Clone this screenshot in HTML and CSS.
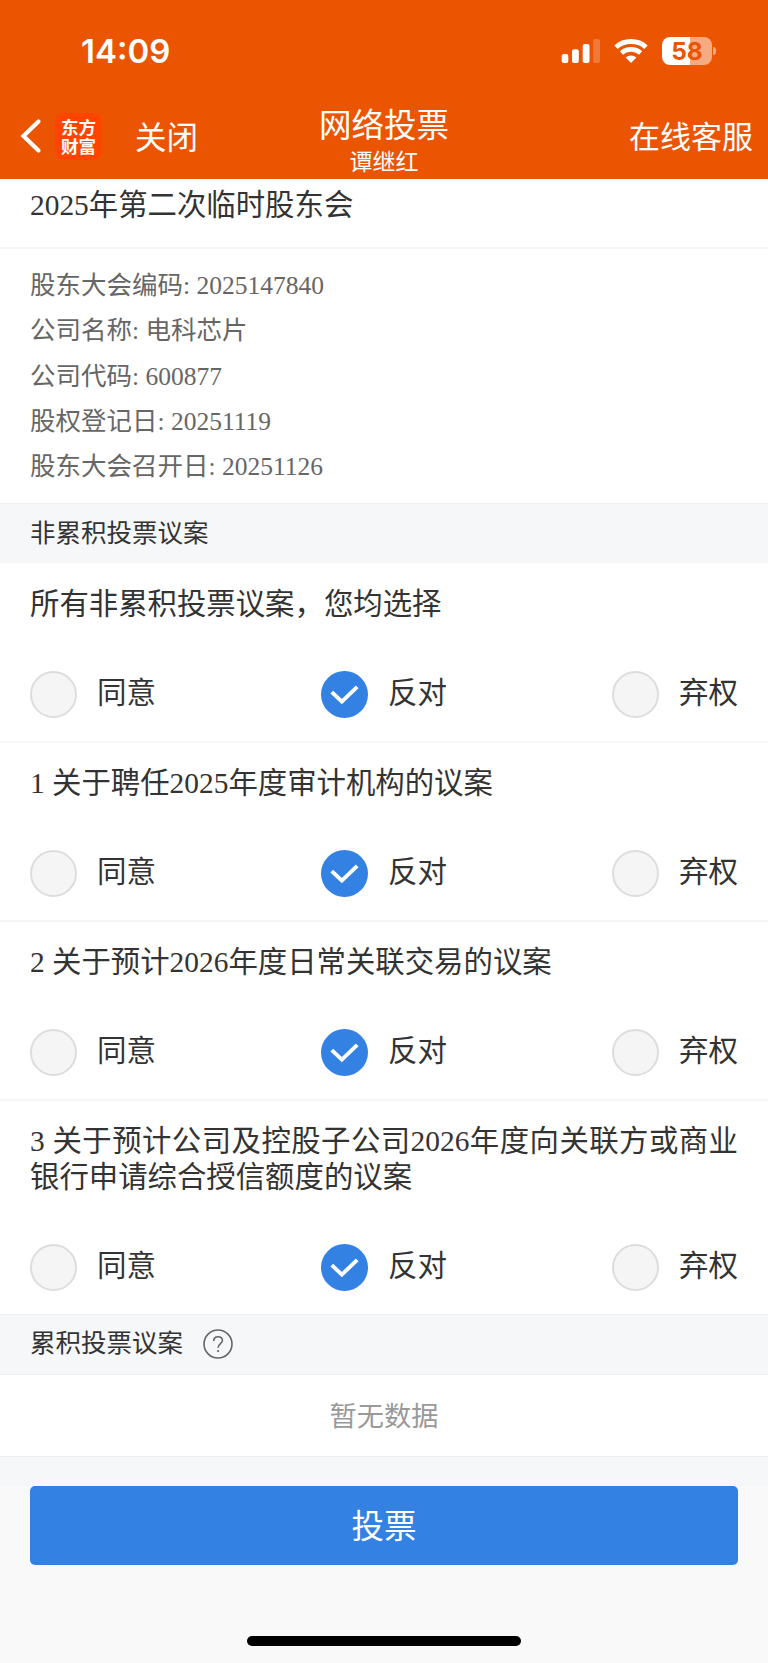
FILE: index.html
```
<!DOCTYPE html>
<html lang="zh-CN">
<head>
    <meta charset="UTF-8">
    <meta name="viewport" content="width=device-width, initial-scale=1.0">
    <link rel="stylesheet" href="styles.css">
    <title>网络投票</title>
</head>
<body>
    <header class="main-header">
        <div class="status-bar">
            <span class="time">14:09</span>
            <div class="status-icons">
                <svg class="signal" width="40" height="26" viewBox="0 0 40 26">
                    <rect x="0.7" y="16" width="6.6" height="9" rx="2" fill="#fff"/>
                    <rect x="11" y="11.3" width="6.8" height="13.7" rx="2" fill="#fff"/>
                    <rect x="21.7" y="6" width="6.8" height="19" rx="2" fill="#fff"/>
                    <rect x="32.2" y="1" width="6.8" height="24" rx="2" fill="#fff" opacity="0.22"/>
                </svg>
                <svg class="wifi" width="34" height="26" viewBox="0 0 34 26">
                    <path d="M2 9.2 C10 1.6 24 1.6 32 9.2" fill="none" stroke="#fff" stroke-width="4.8"/>
                    <path d="M7.4 15 C12.7 10.2 21.3 10.2 26.6 15" fill="none" stroke="#fff" stroke-width="4.6"/>
                    <path d="M11.6 19.6 C14.6 16.9 19.4 16.9 22.4 19.6 L17 25Z" fill="#fff"/>
                </svg>
                <div class="battery"><span>58</span></div>
            </div>
        </div>
        <nav class="nav-bar">
            <div class="nav-left">
                <svg class="back" width="22" height="36" viewBox="0 0 22 36">
                    <path d="M18.5 3.5 L3.5 18 L18.5 32.5" fill="none" stroke="#fff" stroke-width="4.2" stroke-linecap="round"/>
                </svg>
                <div class="logo">东方<br>财富</div>
                <span class="close">关闭</span>
            </div>
            <div class="nav-title">
                <h1>网络投票</h1>
                <p>谭继红</p>
            </div>
            <span class="service">在线客服</span>
        </nav>
    </header>

    <div id="main">
        <h2 class="meeting">2025年第二次临时股东会</h2>
        <ul class="info">
            <li>股东大会编码: 2025147840</li>
            <li>公司名称: 电科芯片</li>
            <li>公司代码: 600877</li>
            <li>股权登记日: 20251119</li>
            <li>股东大会召开日: 20251126</li>
        </ul>

        <div class="section">非累积投票议案</div>

        <div class="vote first">
            <h3>所有非累积投票议案，您均选择</h3>
            <div class="options">
                <div class="option"><i class="radio"></i><span>同意</span></div>
                <div class="option"><i class="radio checked"><svg viewBox="0 0 48 48"><path d="M11 21.5 L21.3 31.3 L37 16.2"/></svg></i><span>反对</span></div>
                <div class="option"><i class="radio"></i><span>弃权</span></div>
            </div>
        </div>
        <div class="vote">
            <h3>1 关于聘任2025年度审计机构的议案</h3>
            <div class="options">
                <div class="option"><i class="radio"></i><span>同意</span></div>
                <div class="option"><i class="radio checked"><svg viewBox="0 0 48 48"><path d="M11 21.5 L21.3 31.3 L37 16.2"/></svg></i><span>反对</span></div>
                <div class="option"><i class="radio"></i><span>弃权</span></div>
            </div>
        </div>
        <div class="vote">
            <h3>2 关于预计2026年度日常关联交易的议案</h3>
            <div class="options">
                <div class="option"><i class="radio"></i><span>同意</span></div>
                <div class="option"><i class="radio checked"><svg viewBox="0 0 48 48"><path d="M11 21.5 L21.3 31.3 L37 16.2"/></svg></i><span>反对</span></div>
                <div class="option"><i class="radio"></i><span>弃权</span></div>
            </div>
        </div>
        <div class="vote last">
            <h3>3 关于预计公司及控股子公司2026年度向关联方或商业银行申请综合授信额度的议案</h3>
            <div class="options">
                <div class="option"><i class="radio"></i><span>同意</span></div>
                <div class="option"><i class="radio checked"><svg viewBox="0 0 48 48"><path d="M11 21.5 L21.3 31.3 L37 16.2"/></svg></i><span>反对</span></div>
                <div class="option"><i class="radio"></i><span>弃权</span></div>
            </div>
        </div>

        <div class="section">累积投票议案
            <svg class="help" width="30" height="30" viewBox="0 0 30 30" fill="none" stroke="#666" stroke-width="1.6">
                <circle cx="15" cy="15" r="14"/>
                <path d="M10.7 12 C10.7 9.2 12.5 7.7 15.1 7.7 C17.7 7.7 19.4 9.3 19.4 11.5 C19.4 14.5 15.1 14.9 15.1 18.8"/>
                <circle cx="15.1" cy="22" r="1.1" fill="#666" stroke="none"/>
            </svg>
        </div>
        <div class="empty">暂无数据</div>
    </div>

    <footer class="footer">
        <button class="submit">投票</button>
        <div class="home-bar"></div>
    </footer>
</body>
</html>
```
FILE: styles.css
```
*, body{
    box-sizing: border-box;
    margin: 0;
    padding: 0;
}
body{
    font-family: 'Liberation Serif', 'Noto Sans CJK SC', sans-serif;
    color: #333;
    background: #f9f9f9;
}
li{
    list-style: none;
}
h1,h2,h3{
    font-weight: 400;
}

/* header */
.main-header{
    height: 179px;
    background: #eb5502;
    color: #fff;
    font-family: 'Noto Sans CJK SC', sans-serif;
}
.status-bar{
    display: flex;
    justify-content: space-between;
    height: 94px;
    padding: 31px 56px 0 81px;
}
.time{
    font: 600 33px/40px Inter, sans-serif;
}
.status-icons{
    display: flex;
    align-items: flex-start;
    padding-top: 7px;
}
.wifi{
    margin-left: 13px;
}
.battery{
    position: relative;
    width: 50px;
    height: 28px;
    margin: -1px 0 0 14px;
    border-radius: 8px;
    background: linear-gradient(90deg, #fff 28px, #f5aa81 28px);
    color: #eb5502;
    font: 700 24.5px/29px Inter, sans-serif;
    text-align: center;
}
.battery::after{
    position: absolute;
    content: '';
    right: -4px;
    top: 10px;
    width: 3px;
    height: 8px;
    border-radius: 0 3px 3px 0;
    background: #f5aa81;
}

.nav-bar{
    display: grid;
    grid-template-columns: 1fr auto 1fr;
    height: 85px;
    padding: 0 15px;
}
.nav-left{
    display: flex;
    align-items: center;
    height: 84px;
    padding-left: 5px;
}
.logo{
    width: 47px;
    height: 47px;
    margin-left: 13px;
    padding-top: 4px;
    border-radius: 9px;
    background: #ff4400;
    font-weight: 700;
    font-size: 17.5px;
    line-height: 19px;
    text-align: center;
}
.close{
    margin-left: 33px;
    padding-bottom: 3px;
    font-size: 31.5px;
    line-height: 40px;
}
.nav-title{
    text-align: center;
}
.nav-title h1{
    padding-top: 9px;
    font-size: 32.5px;
    line-height: 40px;
}
.nav-title p{
    padding-top: 1px;
    font-size: 23px;
    line-height: 32px;
}
.service{
    justify-self: end;
    font-size: 31px;
    line-height: 81px;
}

/* content */
#main{
    background: #fff;
}
.meeting{
    height: 70px;
    padding: 8px 30px 0;
    border-bottom: 2px solid #f5f5f5;
    font-size: 29.4px;
    line-height: 36px;
}
.info{
    height: 254px;
    padding: 14px 30px 0;
    color: #666;
    font-size: 25.5px;
    line-height: 45.3px;
}
.section{
    display: flex;
    align-items: center;
    height: 60px;
    padding: 0 30px;
    background: #f6f7f9;
    border-top: 1px solid #f0f0f0;
    font-size: 25.5px;
    line-height: 36px;
}
.help{
    margin-left: 20px;
}
.vote{
    padding: 23px 30px;
    border-bottom: 2px solid #f5f5f5;
}
.first{
    padding-top: 24px;
}
.vote h3{
    margin-bottom: 48.5px;
    font-size: 29.4px;
    line-height: 35.5px;
    text-align: justify;
}
.last{
    border-bottom: 0;
}
.options{
    display: flex;
    justify-content: space-between;
}
.option{
    display: flex;
    gap: 20px;
    font-size: 29.5px;
    line-height: 45px;
}
.radio{
    width: 47px;
    height: 47px;
    border: 2px solid #ddd;
    border-radius: 50%;
    background: #f5f5f5;
}
.checked{
    border: 0;
    background: #3281e3;
}
.checked svg{
    display: block;
    fill: none;
    stroke: #fff;
    stroke-width: 4;
}
.empty{
    height: 82px;
    border-top: 1px solid #eee;
    color: #999;
    font-size: 27.2px;
    line-height: 84px;
    text-align: center;
}

/* bottom */
.footer{
    display: flex;
    flex-direction: column;
    align-items: center;
    height: 206px;
    padding: 0 30px;
    border-top: 1px solid #eee;
    background: linear-gradient(#f6f7f9 29px, #f9f9f9 29px);
}
.submit{
    width: 100%;
    height: 79px;
    margin-top: 29px;
    padding-bottom: 4px;
    border: 0;
    border-radius: 5px;
    background: #3281e3;
    color: #fff;
    font-family: 'Noto Sans CJK SC', sans-serif;
    font-size: 32.5px;
}
.home-bar{
    width: 274px;
    height: 10px;
    margin-top: 71px;
    border-radius: 5px;
    background: #000;
}
```
